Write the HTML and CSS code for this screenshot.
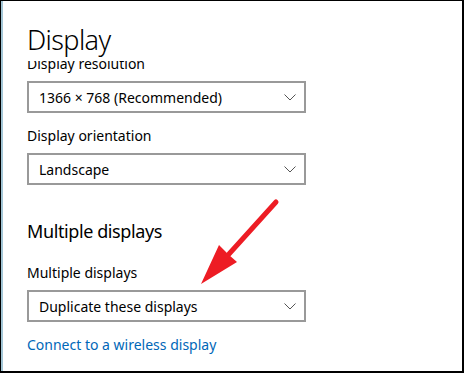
FILE: index.html
```html
<!DOCTYPE html>
<html>
<head>
    <title>Display settings</title>
    <link rel="stylesheet" href="styles.css">
</head>
<body>

    <div class="frame">
        <div class="page">
            <div class="page-header">
                <h1 class="page-title">Display</h1>
            </div>

            <div class="scroll-area">
                <div class="scroll-content">
                    <div class="setting">
                        <div class="setting-label">Display resolution</div>
                        <div class="dropdown">
                            <span class="dropdown-value">1366 × 768 (Recommended)</span>
                            <svg class="chevron" width="12" height="7" viewBox="0 0 12 7"><path d="M0.5 0.5 L6 6 L11.5 0.5" fill="none" stroke="#555" stroke-width="1"/></svg>
                        </div>
                    </div>

                    <div class="setting">
                        <div class="setting-label">Display orientation</div>
                        <div class="dropdown">
                            <span class="dropdown-value">Landscape</span>
                            <svg class="chevron" width="12" height="7" viewBox="0 0 12 7"><path d="M0.5 0.5 L6 6 L11.5 0.5" fill="none" stroke="#555" stroke-width="1"/></svg>
                        </div>
                    </div>

                    <h2 class="section-title">Multiple displays</h2>

                    <div class="setting">
                        <div class="setting-label">Multiple displays</div>
                        <div class="dropdown">
                            <span class="dropdown-value">Duplicate these displays</span>
                            <svg class="chevron" width="12" height="7" viewBox="0 0 12 7"><path d="M0.5 0.5 L6 6 L11.5 0.5" fill="none" stroke="#555" stroke-width="1"/></svg>
                        </div>
                    </div>

                    <a class="link" href="#">Connect to a wireless display</a>
                </div>
            </div>
        </div>

        <!-- annotation arrow drawn over the screenshot -->
        <svg class="arrow" width="464" height="373" viewBox="0 0 464 373">
            <line x1="276" y1="202" x2="229" y2="254" stroke="#ed1c24" stroke-width="5" stroke-linecap="round"/>
            <polygon points="201,284 219,245 229,255 237,262" fill="#ed1c24"/>
        </svg>
    </div>

</body>
</html>
```

FILE: styles.css
```css
html, body {
    margin: 0;
    height: 100%;
}

body {
    font-family: "Noto Sans", "Open Sans", sans-serif;
    background-color: #ffffff;
    color: #000000;
}

.frame {
    position: relative;
    box-sizing: border-box;
    height: 373px;
    width: 464px;
    border-top: 1px solid #000;
    border-left: 1px solid #000;
    border-right: 2px solid #000;
    border-bottom: 2px solid #000;
    overflow: hidden;
}

.page {
    box-sizing: border-box;
    height: 100%;
    border-left: 2px solid #a3c6d6;
    padding-left: 24px;
    display: flex;
    flex-direction: column;
}

.page-header {
    height: 60px;
    flex-shrink: 0;
}

.page-title {
    margin: 0;
    padding-top: 25px;
    font-size: 27px;
    font-weight: 300;
    line-height: 28px;
    letter-spacing: -0.6px;
}

/* content scrolled up a little, so the first label is cut by the header */
.scroll-area {
    flex: 1;
    overflow: hidden;
}

.scroll-content {
    margin-top: -7px;
}

.setting {
    margin-bottom: 13px;
}

.setting-label {
    font-size: 14px;
    line-height: 20px;
    margin-bottom: 7px;
}

.dropdown {
    box-sizing: border-box;
    width: 279px;
    height: 32px;
    border: 2px solid #999;
    display: flex;
    align-items: center;
    justify-content: space-between;
    padding: 0 8px 0 10px;
}

.dropdown-value {
    font-size: 14px;
}

.chevron {
    display: block;
}

.section-title {
    margin: 33px 0 19px;
    font-size: 18px;
    font-weight: 400;
    line-height: 26px;
    letter-spacing: -0.4px;
}

.link {
    display: block;
    width: max-content;
    font-size: 14px;
    line-height: 20px;
    color: #0067b8;
    text-decoration: none;
}

.arrow {
    position: absolute;
    left: -1px;
    top: -1px;
    pointer-events: none;
}
```
